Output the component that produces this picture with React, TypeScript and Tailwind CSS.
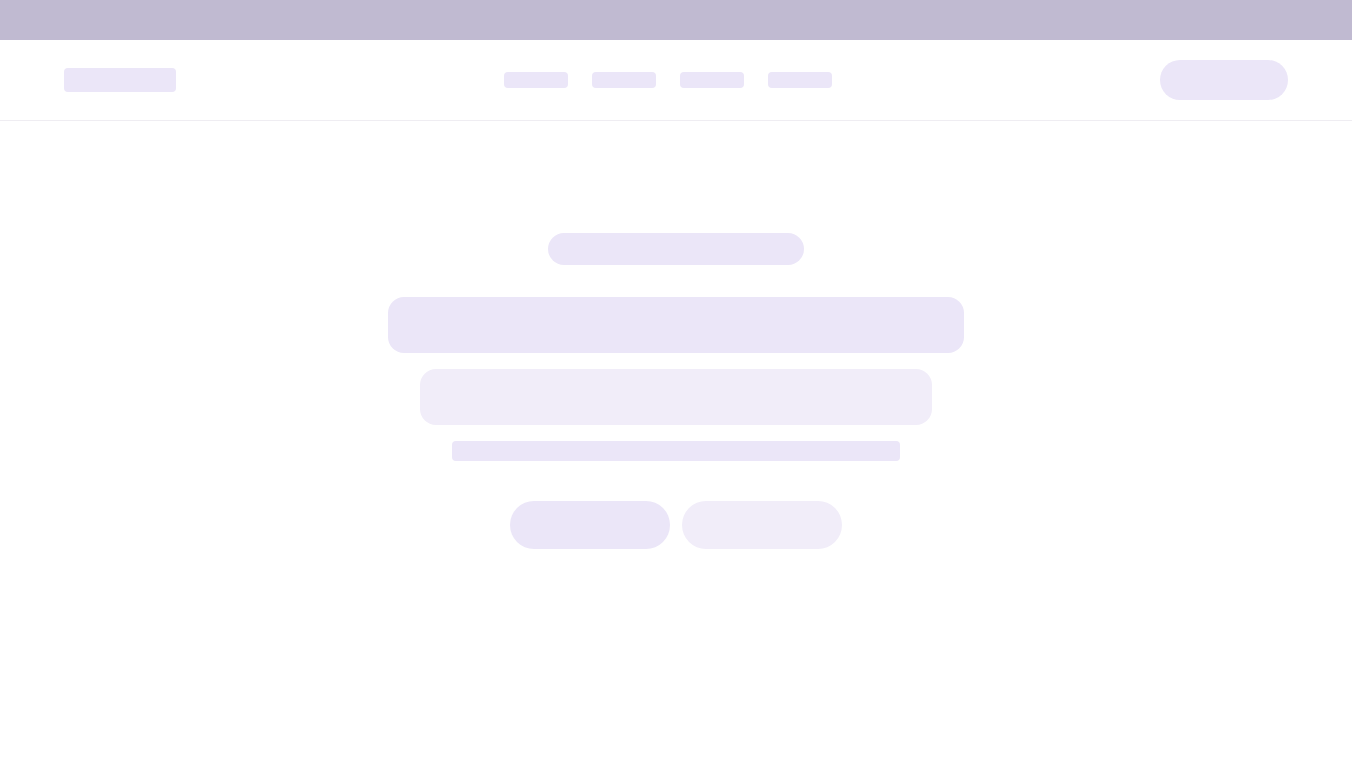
import React from "react";

export default function App() {
  return (
    <div className="min-h-screen bg-white" style={{ fontFamily: "Inter, sans-serif" }}>
      {/* Top bar */}
      <div className="h-10 bg-[#c0bad1]" />

      {/* Header */}
      <header className="h-[81px] border-b border-[#efedf2] px-16 flex items-center justify-between">
        <div className="h-6 w-28 rounded bg-[#ebe6f8]" />
        <nav className="flex gap-6">
          <div className="h-4 w-16 rounded bg-[#ebe6f8]" />
          <div className="h-4 w-16 rounded bg-[#ebe6f8]" />
          <div className="h-4 w-16 rounded bg-[#ebe6f8]" />
          <div className="h-4 w-16 rounded bg-[#ebe6f8]" />
        </nav>
        <div className="h-10 w-32 rounded-full bg-[#ebe6f8]" />
      </header>

      {/* Hero */}
      <main className="flex flex-col items-center pt-28">
        <div className="h-8 w-64 rounded-full bg-[#ebe6f8]" />
        <div className="mt-8 h-14 w-[576px] rounded-2xl bg-[#ebe6f8]" />
        <div className="mt-4 h-14 w-[512px] rounded-2xl bg-[#f1edf9]" />
        <div className="mt-4 h-5 w-[448px] rounded-sm bg-[#ebe6f8]" />
        <div className="mt-10 flex gap-3">
          <div className="h-12 w-40 rounded-full bg-[#ebe6f8]" />
          <div className="h-12 w-40 rounded-full bg-[#f1edf9]" />
        </div>
      </main>
    </div>
  );
}
